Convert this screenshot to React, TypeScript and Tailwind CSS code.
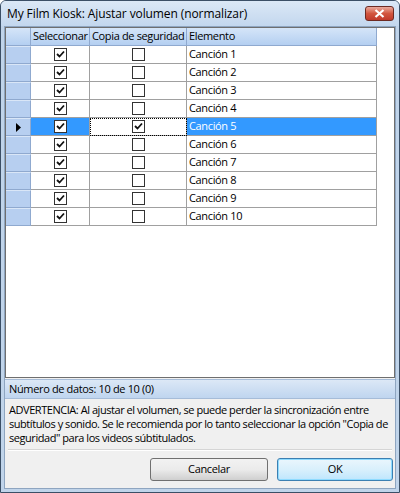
import React from "react";

const rows = Array.from({ length: 10 }, (_, i) => `Canción ${i + 1}`);

function Check({ checked }: { checked: boolean }) {
  return (
    <div className="w-[13px] h-[13px] border border-[#333] bg-white flex items-center justify-center">
      {checked && (
        <svg width="9" height="9" viewBox="0 0 9 9">
          <path d="M1 4 L3.5 6.5 L8 1.5" stroke="#111" strokeWidth="1.8" fill="none" />
        </svg>
      )}
    </div>
  );
}

export default function App() {
  const font = { fontFamily: '"Segoe UI", "Open Sans", "Noto Sans", sans-serif' };
  const hdr = "bg-gradient-to-b from-[#d5e5f8] to-[#b4cff1] border-r border-b border-[#8fa9cf]";
  return (
    <div className="w-[400px] h-[493px] flex flex-col bg-[#c0d4ea] border border-[#3b4f66] rounded-t-[6px] overflow-hidden" style={font}>
      {/* Title bar */}
      <div className="h-[25px] flex items-center justify-between pl-[6px] pr-[5px] bg-gradient-to-b from-[#dbe8f6] to-[#c3d7ee]">
        <span className="text-[12px] text-black tracking-[-0.1px]">My Film Kiosk: Ajustar volumen (normalizar)</span>
        <div className="w-[29px] h-[15px] rounded-[3px] border border-[#6d2a22] bg-gradient-to-b from-[#e9a99c] via-[#d2563f] to-[#c0392b] flex items-center justify-center">
          <svg width="11" height="9" viewBox="0 0 11 9">
            <path d="M1.5 1 L9.5 8 M9.5 1 L1.5 8" stroke="#fff" strokeWidth="2.2" />
          </svg>
        </div>
      </div>
      {/* Client */}
      <div className="flex-1 flex flex-col mx-[3px] mb-[3px] bg-[#f0f0f0] border border-[#8ea5c0] text-[11px] tracking-[-0.35px]">
        {/* Grid */}
        <div className="h-[351px] bg-white border border-[#6f6f6f]">
          <div className="flex h-[18px]">
            <div className={`w-[25px] ${hdr}`} />
            <div className={`w-[59px] ${hdr} px-[2px] flex items-center whitespace-nowrap`}>Seleccionar</div>
            <div className={`w-[97px] ${hdr} px-[2px] flex items-center whitespace-nowrap`}>Copia de seguridad</div>
            <div className={`w-[190px] ${hdr} px-[2px] flex items-center`}>Elemento</div>
          </div>
          {rows.map((r, i) => {
            const sel = i === 4;
            return (
              <div key={r} className="flex h-[18px]">
                <div className="w-[25px] bg-[#b7cff0] border-r border-b border-[#8fa9cf] border-t border-t-[#d9e6f7] flex items-center justify-center">
                  {sel && (
                    <svg width="5" height="9" viewBox="0 0 5 9">
                      <path d="M0 0 L5 4.5 L0 9 Z" fill="#000" />
                    </svg>
                  )}
                </div>
                <div className={`w-[59px] border-r border-b border-[#a0a0a0] flex items-center justify-center ${sel ? "bg-[#3399ff]" : ""}`}>
                  <Check checked />
                </div>
                <div className={`w-[97px] border-r border-b border-[#a0a0a0] flex items-center justify-center ${sel ? "outline outline-1 outline-dotted outline-black -outline-offset-1" : ""}`}>
                  <Check checked={sel} />
                </div>
                <div className={`w-[190px] border-r border-b border-[#a0a0a0] px-[2px] flex items-center ${sel ? "bg-[#3399ff] text-white" : "text-black"}`}>
                  {r}
                </div>
              </div>
            );
          })}
        </div>
        {/* Status */}
        <div className="h-[20px] mt-[1px] flex items-center px-[4px] bg-gradient-to-b from-[#dce8f6] to-[#bfd5ef] border-t border-b border-[#a6bcd8]">
          Número de datos: 10 de 10 (0)
        </div>
        {/* Warning */}
        <div className="px-[4px] pt-[4px] leading-[14px] text-black h-[50px] tracking-[-0.45px]">
          ADVERTENCIA: Al ajustar el volumen, se puede perder la sincronización entre subtítulos y sonido. Se le recomienda por lo tanto seleccionar la opción "Copia de seguridad" para los videos súbtitulados.
        </div>
        <div className="mx-[3px] border-t border-[#d5d5d5] border-b border-b-white" />
        <div className="flex-1 flex justify-end items-center gap-[9px] pr-[2px]">
          <button className="w-[118px] h-[23px] rounded-[3px] border border-[#707070] bg-gradient-to-b from-[#f2f2f2] via-[#ebebeb] to-[#cfcfcf]">Cancelar</button>
          <button className="w-[116px] h-[23px] rounded-[3px] border border-[#3c7fb1] bg-gradient-to-b from-[#eaf6fd] via-[#d9f0fc] to-[#bee6fd] shadow-[inset_0_0_0_1px_#8edbff]">OK</button>
        </div>
      </div>
    </div>
  );
}
